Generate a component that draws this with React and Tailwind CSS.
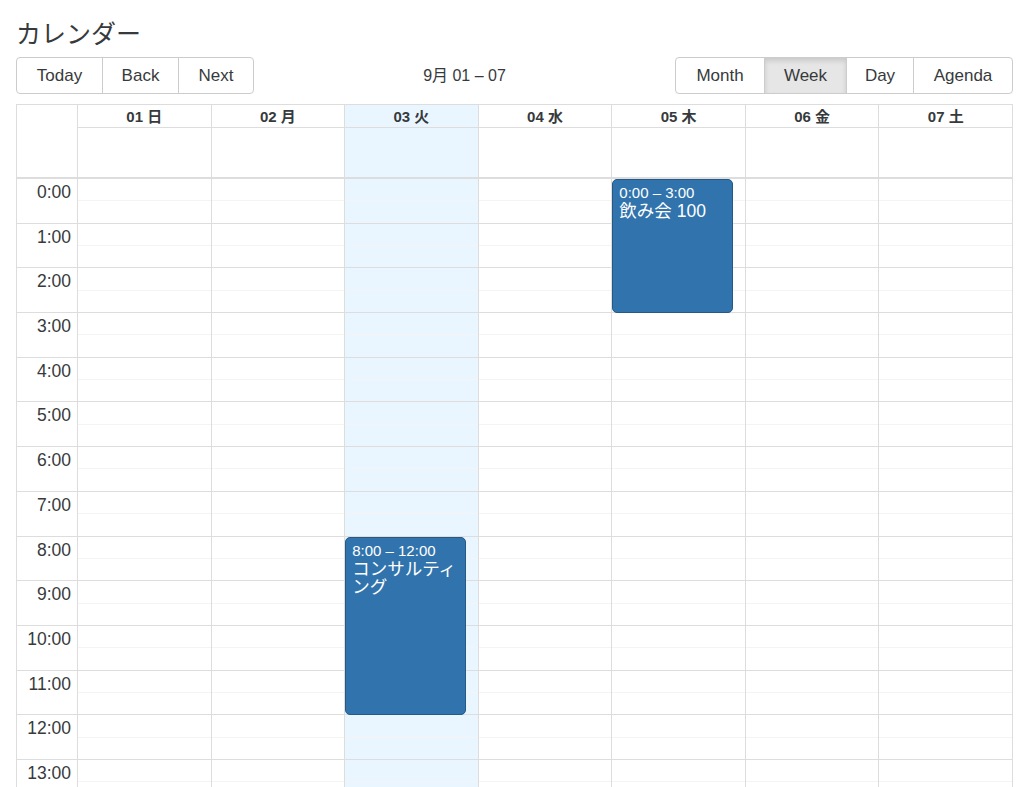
// Week calendar page (react-big-calendar style)

const days = [
  { label: "01 日" },
  { label: "02 月" },
  { label: "03 火", today: true },
  { label: "04 水" },
  { label: "05 木" },
  { label: "06 金" },
  { label: "07 土" },
];

const hours = Array.from({ length: 24 }, (_, i) => `${i}:00`);

const HOUR = 44.7;

const events = [
  { day: 4, start: 0, end: 3, time: "0:00 – 3:00", title: "飲み会 100" },
  { day: 2, start: 8, end: 12, time: "8:00 – 12:00", title: "コンサルティング" },
];

function Button({ children, active, first, last, className }) {
  return (
    <button
      className={
        "-ml-px h-[37px] border border-[#ccc] text-center text-[17px] text-[#373a3c] " +
        (first ? "ml-0 rounded-l-[4px] " : "") +
        (last ? "rounded-r-[4px] " : "") +
        (active ? "bg-[#e6e6e6] border-[#adadad] shadow-[inset_0_3px_5px_rgba(0,0,0,0.125)] " : "bg-white ") +
        className
      }
    >
      {children}
    </button>
  );
}

function App() {
  return (
    <div
      className="h-screen overflow-hidden bg-white pl-4 pr-[11px] text-[#373a3c]"
      style={{ fontFamily: '"Liberation Sans", "Noto Sans CJK JP", sans-serif' }}
    >
      <h1 className="pt-[17px] text-[25px] leading-[34px]">カレンダー</h1>

      {/* Toolbar */}
      <div className="mt-[6px] flex items-center">
        <div className="flex">
          <Button first className="w-[87px]">Today</Button>
          <Button className="w-[77px]">Back</Button>
          <Button last className="w-[76px]">Next</Button>
        </div>
        <div className="flex-1 text-center text-[16px]">9月 01 – 07</div>
        <div className="flex">
          <Button first className="w-[90px]">Month</Button>
          <Button active className="w-[83px]">Week</Button>
          <Button className="w-[68px]">Day</Button>
          <Button last className="w-[100px]">Agenda</Button>
        </div>
      </div>

      {/* Calendar */}
      <div className="mt-[10px] border border-[#ddd]">
        {/* Header */}
        <div className="flex">
          <div className="w-[60px] shrink-0"></div>
          {days.map((d, i) => (
            <div
              key={i}
              className={"flex flex-1 flex-col border-l border-[#ddd] " + (d.today ? "bg-[#eaf6ff]" : "")}
            >
              <div className="h-[23px] border-b border-[#ddd] text-center text-[15px] font-bold leading-[23px]">
                {d.label}
              </div>
              <div className="h-[49px]"></div>
            </div>
          ))}
        </div>

        {/* Time content */}
        <div className="flex border-t-2 border-[#ddd]">
          <div className="w-[60px] shrink-0">
            {hours.map((h) => (
              <div
                key={h}
                className="border-b border-[#ddd] pr-[6px] pt-[2px] text-right text-[17.5px] leading-[22px]"
                style={{ height: HOUR }}
              >
                {h}
              </div>
            ))}
          </div>
          {days.map((d, i) => (
            <div
              key={i}
              className={"relative flex-1 border-l border-[#ddd] " + (d.today ? "bg-[#eaf6ff]" : "")}
            >
              {hours.map((h) => (
                <div key={h} className="flex flex-col border-b border-[#ddd]" style={{ height: HOUR }}>
                  <div className="flex-1 border-b border-[#f4f4f4]"></div>
                  <div className="flex-1"></div>
                </div>
              ))}
              {events
                .filter((e) => e.day === i)
                .map((e) => (
                  <div
                    key={e.title}
                    className="absolute left-0 right-[12px] rounded-[5px] border border-[#265985] bg-[#3174ad] px-[6px] py-[3px] text-white"
                    style={{ top: e.start * HOUR, height: (e.end - e.start) * HOUR }}
                  >
                    <div className="text-[15px] leading-[19px]">{e.time}</div>
                    <div className="text-[17.5px] leading-[18px]">{e.title}</div>
                  </div>
                ))}
            </div>
          ))}
        </div>
      </div>
    </div>
  );
}

export default App;
